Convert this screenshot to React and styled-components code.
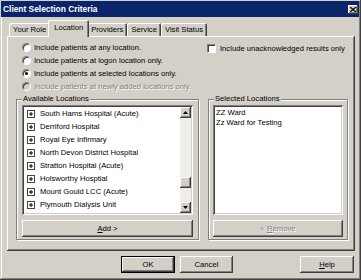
import React from 'react'
import styled, { createGlobalStyle, css } from 'styled-components'

const GlobalStyle = createGlobalStyle`
  html, body {
    margin: 0;
    padding: 0;
    background: #d4d0c8;
  }
  body {
    font-family: "Liberation Sans", Arial, sans-serif;
    font-size: 7.65px;
    color: #000;
  }
  * {
    box-sizing: border-box;
  }
`

const raised = css`
  background: #d4d0c8;
  box-shadow: inset -1px -1px #404040, inset 1px 1px #fff, inset -2px -2px #808080;
`

const sunken = css`
  box-shadow: inset 1px 1px #808080, inset -1px -1px #fff, inset 2px 2px #404040, inset -2px -2px #d4d0c8;
`

const Window = styled.div`
  width: 361px;
  height: 280px;
  background: #d4d0c8;
  box-shadow: inset -1px -1px #404040, inset 1px 1px #d4d0c8, inset -2px -2px #808080, inset 2px 2px #fff;
  padding: 1px 2px 0 1px;
  display: flex;
  flex-direction: column;
`

const TitleBar = styled.div`
  height: 16px;
  background: #0a246a;
  color: #fff;
  font-weight: bold;
  font-size: 8.4px;
  display: flex;
  align-items: center;
  padding: 0 1px 0 2px;
`

const CloseBox = styled.div`
  margin-left: auto;
  width: 10px;
  height: 9px;
  ${raised};
  display: flex;
  align-items: center;
  justify-content: center;
`

const Body = styled.div`
  padding: 3px 4px 0 6px;
  display: flex;
  flex-direction: column;
`

const TabStrip = styled.div`
  height: 16px;
  display: flex;
  align-items: flex-end;
  padding-left: 2px;
  position: relative;
  z-index: 2;
`

const Tab = styled.div`
  position: relative;
  height: ${p => (p.$active ? '17px' : '13px')};
  margin: ${p => (p.$active ? '0 -2px -1px' : '0')};
  padding: ${p => (p.$active ? '0 6px 2px' : '0 4px')};
  background: #d4d0c8;
  border-radius: 2px 2px 0 0;
  box-shadow: inset 1px 1px #fff, inset -1px 0 #404040, inset -2px 0 #808080;
  z-index: ${p => (p.$active ? 2 : 1)};
  display: flex;
  align-items: center;
  white-space: nowrap;
`

const Panel = styled.div`
  height: 215px;
  position: relative;
  z-index: 1;
  box-shadow: inset -1px -1px #404040, inset 1px 1px #fff, inset -2px -2px #808080;
  padding: 5px 7px 0 9px;
  display: flex;
  flex-direction: column;
`

const Options = styled.div`
  display: flex;
`

const RadioList = styled.div`
  width: 191px;
  padding-left: 6px;
  display: flex;
  flex-direction: column;
`

const OptionRow = styled.label`
  height: 13px;
  display: flex;
  align-items: center;
  gap: 3px;
  white-space: nowrap;
  color: ${p => (p.$disabled ? '#808080' : '#000')};
  text-shadow: ${p => (p.$disabled ? '1px 1px #fff' : 'none')};
`

const Radio = styled.span`
  flex: 0 0 auto;
  width: 9px;
  height: 9px;
  border-radius: 50%;
  border: 1px solid;
  border-color: #808080 #fff #fff #808080;
  box-shadow: inset 1px 1px #404040;
  background: ${p => (p.$disabled ? '#d4d0c8' : '#fff')};
  display: flex;
  align-items: center;
  justify-content: center;

  &::after {
    content: '';
    width: 3px;
    height: 3px;
    border-radius: 50%;
    background: ${p => (p.$checked ? '#000' : 'transparent')};
  }
`

const CheckRow = styled(OptionRow)`
  gap: 4px;
  margin-top: 1px;
`

const CheckBox = styled.span`
  flex: 0 0 auto;
  width: 9px;
  height: 9px;
  background: #fff;
  border: 1px solid;
  border-color: #808080 #fff #fff #808080;
  box-shadow: inset 1px 1px #404040;
`

const Groups = styled.div`
  display: flex;
  gap: 9px;
  margin-top: 6px;
`

const Group = styled.div`
  width: ${p => p.$width}px;
  height: 141px;
  border: 1px solid #808080;
  box-shadow: inset 1px 1px #fff, 1px 1px #fff;
  padding: 0 ${p => p.$pad}px;
  display: flex;
  flex-direction: column;
`

const Legend = styled.div`
  align-self: flex-start;
  height: 10px;
  line-height: 10px;
  margin: -6px 0 0 ${p => p.$indent}px;
  padding: 0 1px;
  background: #d4d0c8;
  white-space: nowrap;
`

const ListBox = styled.div`
  height: 110px;
  margin-top: 1px;
  background: #fff;
  ${sunken};
  padding: 2px;
  display: flex;
  overflow: hidden;
`

const Items = styled.div`
  flex: 1;
  overflow: hidden;
  padding: ${p => (p.$tree ? '0 0 0 3px' : '1px 0 0 1px')};
`

const TreeItem = styled.div`
  height: 13px;
  display: flex;
  align-items: center;
  gap: 5px;
  white-space: nowrap;
`

const PlainItem = styled.div`
  height: 10px;
  line-height: 10px;
  white-space: nowrap;
`

const ScrollBar = styled.div`
  width: 11px;
  display: flex;
  flex-direction: column;
  background: #eeede8;
`

const ScrollButton = styled.div`
  height: 11px;
  ${raised};
  display: flex;
  align-items: center;
  justify-content: center;
`

const Track = styled.div`
  flex: 1;
  padding-top: ${p => p.$offset}px;
`

const Thumb = styled.div`
  height: 11px;
  ${raised};
`

const PushButton = styled.div`
  height: 17px;
  width: ${p => (p.$width ? `${p.$width}px` : 'auto')};
  margin-top: ${p => p.$top || 0}px;
  ${raised};
  ${p =>
    p.$default &&
    css`
      box-shadow: inset 0 0 0 1px #000, inset -2px -2px #404040, inset 2px 2px #fff, inset -3px -3px #808080;
    `}
  display: flex;
  align-items: center;
  justify-content: center;
  white-space: nowrap;
  color: ${p => (p.$disabled ? '#808080' : '#000')};
  text-shadow: ${p => (p.$disabled ? '1px 1px #fff' : 'none')};
`

const Footer = styled.div`
  display: flex;
  justify-content: flex-end;
  gap: 5px;
  margin-top: 5px;
  padding-right: 1px;
`

const Spacer = styled.div`
  width: 57px;
`

const CloseIcon = () => (
  <svg width="6" height="5" viewBox="0 0 6 5">
    <path d="M0 0L6 5M6 0L0 5" stroke="#000" strokeWidth="1.3" />
  </svg>
)

const Arrow = ({ down }) => (
  <svg width="5" height="3" viewBox="0 0 5 3">
    <path d={down ? 'M0 0H5L2.5 3Z' : 'M0 3H5L2.5 0Z'} fill="#000" />
  </svg>
)

const Expander = () => (
  <svg width="8" height="8" viewBox="0 0 8 8" style={{ flex: '0 0 auto' }}>
    <rect x="0.5" y="0.5" width="7" height="7" fill="#fff" stroke="#444" />
    <path d="M2 4H6M4 2V6" stroke="#000" />
  </svg>
)

const tabs = ['Your Role', 'Location', 'Providers', 'Service', 'Visit Status']

const options = [
  { text: 'Include patients at any location.' },
  { text: 'Include patients at logon location only.' },
  { text: 'Include patients at selected locations only.', checked: true },
  { text: 'Include patients at newly added locations only.', disabled: true },
]

const available = [
  'South Hams Hospital (Acute)',
  'Derriford Hospital',
  'Royal Eye Infirmary',
  'North Devon District Hospital',
  'Stratton Hospital (Acute)',
  'Holsworthy Hosptial',
  'Mount Gould LCC (Acute)',
  'Plymouth Dialysis Unit',
  '',
]

const selected = ['ZZ Ward', 'Zz Ward for Testing']

export default function App() {
  return (
    <>
      <GlobalStyle />
      <Window>
        <TitleBar>
          Client Selection Criteria
          <CloseBox>
            <CloseIcon />
          </CloseBox>
        </TitleBar>
        <Body>
          <TabStrip>
            {tabs.map(t => (
              <Tab key={t} $active={t === 'Location'}>
                {t}
              </Tab>
            ))}
          </TabStrip>
          <Panel>
            <Options>
              <RadioList>
                {options.map(o => (
                  <OptionRow key={o.text} $disabled={o.disabled}>
                    <Radio $checked={o.checked} $disabled={o.disabled} />
                    {o.text}
                  </OptionRow>
                ))}
              </RadioList>
              <div>
                <CheckRow>
                  <CheckBox />
                  Include unacknowledged results only
                </CheckRow>
              </div>
            </Options>
            <Groups>
              <Group $width={183} $pad={5}>
                <Legend $indent={0}>Available Locations</Legend>
                <ListBox>
                  <Items $tree>
                    {available.map((name, i) => (
                      <TreeItem key={i}>
                        <Expander />
                        {name}
                      </TreeItem>
                    ))}
                  </Items>
                  <ScrollBar>
                    <ScrollButton>
                      <Arrow />
                    </ScrollButton>
                    <Track $offset={59}>
                      <Thumb />
                    </Track>
                    <ScrollButton>
                      <Arrow down />
                    </ScrollButton>
                  </ScrollBar>
                </ListBox>
                <PushButton $top={5}>
                  <span>
                    <u>A</u>dd &gt;
                  </span>
                </PushButton>
              </Group>
              <Group $width={140} $pad={4}>
                <Legend $indent={1}>Selected Locations</Legend>
                <ListBox>
                  <Items>
                    {selected.map(name => (
                      <PlainItem key={name}>{name}</PlainItem>
                    ))}
                  </Items>
                </ListBox>
                <PushButton $top={5} $disabled>
                  <span>
                    &lt; <u>R</u>emove
                  </span>
                </PushButton>
              </Group>
            </Groups>
          </Panel>
          <Footer>
            <PushButton $width={54} $default>
              OK
            </PushButton>
            <PushButton $width={53}>Cancel</PushButton>
            <Spacer />
            <PushButton $width={54}>
              <span>
                <u>H</u>elp
              </span>
            </PushButton>
          </Footer>
        </Body>
      </Window>
    </>
  )
}
